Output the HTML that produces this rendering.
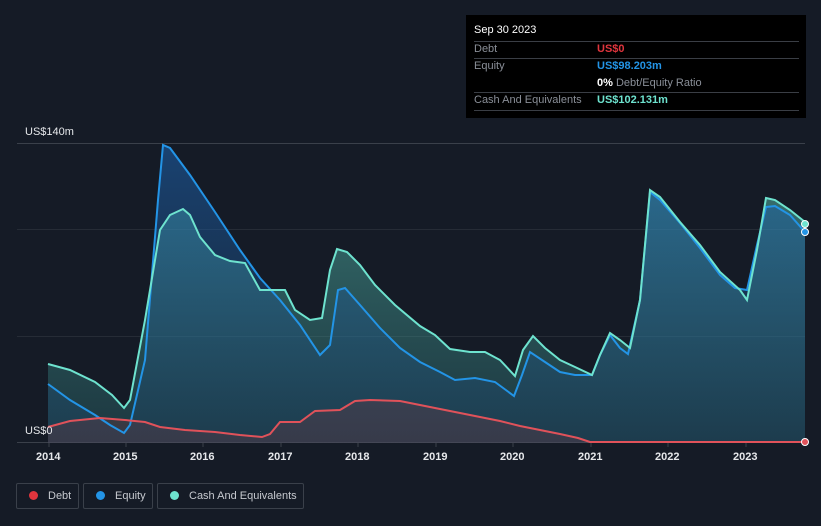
<!DOCTYPE html>
<html><head><style>
body{margin:0;width:821px;height:526px;background:#151b26;font-family:"Liberation Sans",sans-serif;overflow:hidden;position:relative}
.tt{position:absolute;left:466px;top:15px;width:340px;height:103px;background:#000;font-size:11px;color:#8a8f98}
.tt .r{position:absolute;left:8px;width:325px;border-top:1px solid #3a3e45;height:0}
.lg{position:absolute;top:483px;height:26px;border:1px solid #3a404a;border-radius:2px;color:#c6c9cf;font-size:11px;line-height:24px;box-sizing:border-box;white-space:nowrap}
.lg i{display:inline-block;width:9px;height:9px;border-radius:50%;margin:0 10px 0 12px;vertical-align:-1px}
.ax{position:absolute;top:451px;font-size:11px;color:#e6e8eb;font-weight:bold}
</style></head><body>
<svg width="821" height="526" style="position:absolute;left:0;top:0">
<defs>
<linearGradient id="c" x1="0" y1="0" x2="0" y2="1"><stop offset="0" stop-color="#5fd6c4" stop-opacity=".45"/><stop offset="1" stop-color="#2a6b70" stop-opacity=".35"/></linearGradient>
<linearGradient id="e" x1="0" y1="0" x2="0" y2="1"><stop offset="0" stop-color="#1d63b0" stop-opacity=".55"/><stop offset="1" stop-color="#1d4d80" stop-opacity=".2"/></linearGradient>
</defs>
<line x1="17" y1="143.5" x2="805" y2="143.5" stroke="#3a404a"/>
<line x1="17" y1="229.5" x2="805" y2="229.5" stroke="#262c36"/>
<line x1="17" y1="336.5" x2="805" y2="336.5" stroke="#262c36"/>
<line x1="17" y1="442.5" x2="805" y2="442.5" stroke="#3a404a"/>
<g stroke="#3a404a"><line x1="49" y1="443" x2="49" y2="447"/><line x1="126" y1="443" x2="126" y2="447"/><line x1="203" y1="443" x2="203" y2="447"/><line x1="281" y1="443" x2="281" y2="447"/><line x1="358" y1="443" x2="358" y2="447"/><line x1="436" y1="443" x2="436" y2="447"/><line x1="513" y1="443" x2="513" y2="447"/><line x1="591" y1="443" x2="591" y2="447"/><line x1="668" y1="443" x2="668" y2="447"/><line x1="746" y1="443" x2="746" y2="447"/></g>
<polygon fill="url(#c)" points="48,443 48,364 70,370 95,382 112,395 124,408 130,400 145,320 160,230 170,215 183,209 190,215 200,237 215,255 230,261 245,263 260,290 275,290 285,290 295,310 310,320 322,318 330,270 337,249 347,252 360,265 375,285 395,305 420,326 435,335 450,349 470,352 485,352 500,360 515,376 523,350 533,336 545,348 560,360 575,367 592,375 600,355 610,333 620,340 630,348 640,300 650,190 660,197 680,222 700,245 720,272 740,290 747,300 757,250 766,198 775,200 790,210 805,222 805,443"/>
<polygon fill="url(#e)" points="48,443 48,384 70,400 95,415 110,425 124,433 130,425 145,360 158,200 163,145 170,148 190,175 215,212 240,250 260,278 280,300 300,325 320,355 330,345 338,290 345,288 360,305 380,328 400,348 420,362 440,372 455,380 475,378 495,382 514,396 522,375 530,352 545,362 560,372 575,375 592,375 600,355 610,335 620,348 628,354 640,300 650,192 660,200 680,223 700,248 720,275 735,288 747,290 757,245 766,207 775,206 790,215 805,232 805,443"/>
<polygon fill="#6a3a45" fill-opacity=".35" points="48,443 48,427 70,421 100,418 125,420 145,422 160,427 185,430 215,432 240,435 262,437 270,434 280,422 300,422 315,411 340,410 355,401 370,400 400,401 420,405 440,409 460,413 480,417 500,421 520,426 540,430 560,434 578,438 590,442 805,442 805,443"/>
<polyline fill="none" stroke="#2394e6" stroke-width="2" points="48,384 70,400 95,415 110,425 124,433 130,425 145,360 158,200 163,145 170,148 190,175 215,212 240,250 260,278 280,300 300,325 320,355 330,345 338,290 345,288 360,305 380,328 400,348 420,362 440,372 455,380 475,378 495,382 514,396 522,375 530,352 545,362 560,372 575,375 592,375 600,355 610,335 620,348 628,354 640,300 650,192 660,200 680,223 700,248 720,275 735,288 747,290 757,245 766,207 775,206 790,215 805,232"/>
<polyline fill="none" stroke="#6ee3cf" stroke-width="2" points="48,364 70,370 95,382 112,395 124,408 130,400 145,320 160,230 170,215 183,209 190,215 200,237 215,255 230,261 245,263 260,290 275,290 285,290 295,310 310,320 322,318 330,270 337,249 347,252 360,265 375,285 395,305 420,326 435,335 450,349 470,352 485,352 500,360 515,376 523,350 533,336 545,348 560,360 575,367 592,375 600,355 610,333 620,340 630,348 640,300 650,190 660,197 680,222 700,245 720,272 740,290 747,300 757,250 766,198 775,200 790,210 805,222"/>
<polyline fill="none" stroke="#e0525a" stroke-width="2" points="48,427 70,421 100,418 125,420 145,422 160,427 185,430 215,432 240,435 262,437 270,434 280,422 300,422 315,411 340,410 355,401 370,400 400,401 420,405 440,409 460,413 480,417 500,421 520,426 540,430 560,434 578,438 590,442 805,442"/>
<circle cx="805" cy="224" r="3.5" fill="#6ee3cf" stroke="#fff"/>
<circle cx="805" cy="232" r="3.5" fill="#2394e6" stroke="#fff"/>
<circle cx="805" cy="442" r="3.5" fill="#e0525a" stroke="#fff"/>
</svg>
<div style="position:absolute;left:25px;top:126px;font-size:11px;color:#e6e8eb">US$140m</div>
<div style="position:absolute;left:25px;top:425px;font-size:11px;color:#e6e8eb">US$0</div>
<div class="ax" style="left:36px">2014</div><div class="ax" style="left:113px">2015</div><div class="ax" style="left:190px">2016</div><div class="ax" style="left:268px">2017</div><div class="ax" style="left:345px">2018</div><div class="ax" style="left:423px">2019</div><div class="ax" style="left:500px">2020</div><div class="ax" style="left:578px">2021</div><div class="ax" style="left:655px">2022</div><div class="ax" style="left:733px">2023</div>
<div class="tt">
<div style="position:absolute;left:8px;top:9px;color:#fff">Sep 30 2023</div>
<div class="r" style="top:26px"></div>
<div class="r" style="top:43px"></div>
<div class="r" style="top:77px"></div>
<div class="r" style="top:95px"></div>
<div style="position:absolute;left:8px;top:28px">Debt</div><div style="position:absolute;left:131px;top:28px;color:#e0353d;font-weight:bold">US$0</div>
<div style="position:absolute;left:8px;top:45px">Equity</div><div style="position:absolute;left:131px;top:45px;color:#2394e6;font-weight:bold">US$98.203m</div>
<div style="position:absolute;left:131px;top:62px"><b style="color:#fff">0%</b> Debt/Equity Ratio</div>
<div style="position:absolute;left:8px;top:79px">Cash And Equivalents</div><div style="position:absolute;left:131px;top:79px;color:#6ee3cf;font-weight:bold">US$102.131m</div>
</div>
<div class="lg" style="left:16px;width:63px"><i style="background:#e0353d"></i>Debt</div>
<div class="lg" style="left:83px;width:70px"><i style="background:#2394e6"></i>Equity</div>
<div class="lg" style="left:157px;width:147px"><i style="background:#6ee3cf"></i>Cash And Equivalents</div>
</body></html>
